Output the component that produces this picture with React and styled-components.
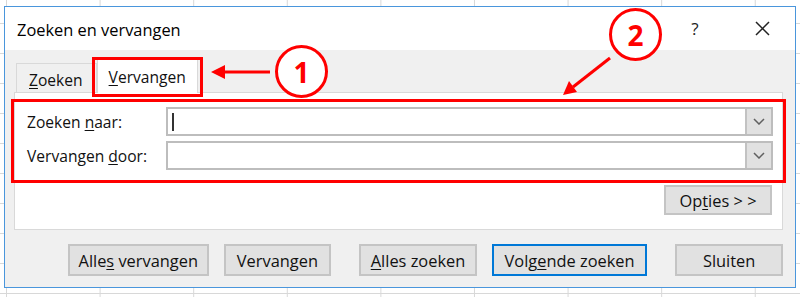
import React from "react";
import styled, { createGlobalStyle } from "styled-components";

const GlobalStyle = createGlobalStyle`
  html, body {
    margin: 0;
    padding: 0;
  }
  body {
    font-family: "Open Sans", "Noto Sans", sans-serif;
    color: #111;
  }
`;

// spreadsheet grid behind the dialog
const Page = styled.div`
  position: relative;
  width: 800px;
  height: 297px;
  overflow: hidden;
  box-sizing: border-box;
  padding: 6px 0 0 4px;
  background-color: #fff;
  background-image: linear-gradient(to right, #d8d8d8 1px, transparent 1px),
    linear-gradient(to bottom, #d8d8d8 1px, transparent 1px);
  background-size: 93.6px 100%, 100% 30px;
  background-position: 6px 0, 0 23px;
`;

const Dialog = styled.div`
  width: 792px;
  height: 282px;
  box-sizing: border-box;
  border: 1px solid #4a96dc;
  background: #f0f0f0;
  display: flex;
  flex-direction: column;
`;

const TitleBar = styled.div`
  height: 43px;
  flex-shrink: 0;
  background: #fff;
  display: flex;
  align-items: center;
  padding-left: 12px;
`;

const Title = styled.div`
  flex: 1;
  font-size: 16.4px;
  color: #000;
  padding-top: 1px;
`;

const TitleButton = styled.div`
  width: 46px;
  height: 30px;
  display: flex;
  align-items: center;
  justify-content: center;
  font-size: 17px;
  color: #222;
  margin-right: ${(p) => p.$gap || 0}px;
`;

const Body = styled.div`
  flex: 1;
  padding: 9px 12px 0 9px;
  display: flex;
  flex-direction: column;
`;

const TabRow = styled.div`
  height: 33px;
  display: flex;
  align-items: flex-end;
  padding-left: 2px;
  position: relative;
  z-index: 1;
`;

const Tab = styled.div`
  box-sizing: border-box;
  height: ${(p) => (p.$active ? 34 : 29)}px;
  margin-bottom: ${(p) => (p.$active ? -1 : 0)}px;
  padding: ${(p) => (p.$active ? "1px 11px 0 11px" : "4px 13px 0 12px")};
  background: ${(p) => (p.$active ? "#fff" : "#f0f0f0")};
  border: 1px solid #d9d9d9;
  border-bottom: none;
  display: flex;
  align-items: center;
  font-size: 15.6px;
  color: #111;
`;

const Key = styled.span`
  text-decoration: underline;
  text-underline-offset: 2px;
`;

const Caption = styled.span`
  white-space: pre;
`;

const Panel = styled.div`
  height: 138px;
  box-sizing: border-box;
  background: #fff;
  border: 1px solid #d9d9d9;
  padding: 14px 9px 0 12px;
  display: flex;
  flex-direction: column;
`;

const FieldRow = styled.div`
  display: flex;
  align-items: center;
  height: 29px;
  margin-bottom: 5px;
`;

const Label = styled.div`
  width: 139px;
  font-size: 15.6px;
  color: #111;
`;

const TextBox = styled.div`
  flex: 1;
  height: 29px;
  box-sizing: border-box;
  border: 2px solid #bdbdbd;
  background: #fff;
  display: flex;
  align-items: center;
  padding-left: 4px;
`;

const Caret = styled.div`
  width: 2px;
  height: 18px;
  background: #333;
`;

const DropButton = styled.div`
  margin-left: auto;
  width: 26px;
  height: 100%;
  box-sizing: border-box;
  border-left: 2px solid #c2c2c2;
  background: #e1e1e1;
  display: flex;
  align-items: center;
  justify-content: center;
`;

const Button = styled.div`
  box-sizing: border-box;
  width: ${(p) => p.$w}px;
  height: ${(p) => p.$h || 32}px;
  margin-left: ${(p) => p.$ml || 0}px;
  background: #e1e1e1;
  border: ${(p) => (p.$default ? "2px solid #0078d7" : "2px solid #c4c4c4")};
  display: flex;
  align-items: center;
  justify-content: center;
  font-size: 16.4px;
  color: #111;
`;

const OptionsRow = styled.div`
  display: flex;
  justify-content: flex-end;
  margin-top: 10px;
  padding-right: 1px;
`;

const Footer = styled.div`
  display: flex;
  margin-top: 14px;
  padding-left: 54px;
`;

// red annotations drawn over the screenshot
const RedFrame = styled.div`
  position: absolute;
  box-sizing: border-box;
  border: 3px solid #ff0000;
  left: ${(p) => p.$x}px;
  top: ${(p) => p.$y}px;
  width: ${(p) => p.$w}px;
  height: ${(p) => p.$h}px;
  z-index: 5;
`;

const Marker = styled.div`
  position: absolute;
  left: ${(p) => p.$x}px;
  top: ${(p) => p.$y}px;
  width: 53px;
  height: 53px;
  box-sizing: border-box;
  border: 3px solid #ff0000;
  border-radius: 50%;
  background: #fff;
  display: flex;
  align-items: center;
  justify-content: center;
  font-size: 28px;
  font-weight: 700;
  color: #ff0000;
  z-index: 5;
`;

const Arrows = styled.svg`
  position: absolute;
  left: 0;
  top: 0;
  z-index: 5;
`;

const Chevron = () => (
  <svg width="12" height="7" viewBox="0 0 12 7">
    <polyline points="1,1 6,6 11,1" fill="none" stroke="#606060" strokeWidth="1.5" />
  </svg>
);

const CloseIcon = () => (
  <svg width="15" height="15" viewBox="0 0 15 15">
    <path d="M1 1 L14 14 M14 1 L1 14" stroke="#222" strokeWidth="1.5" />
  </svg>
);

export default function App() {
  return (
    <Page>
      <GlobalStyle />
      <Dialog>
        <TitleBar>
          <Title>Zoeken en vervangen</Title>
          <TitleButton $gap={21}>?</TitleButton>
          <TitleButton $gap={10}>
            <CloseIcon />
          </TitleButton>
        </TitleBar>
        <Body>
          <TabRow>
            <Tab>
              <Caption>
                <Key>Z</Key>oeken
              </Caption>
            </Tab>
            <Tab $active>
              <Caption>
                <Key>V</Key>ervangen
              </Caption>
            </Tab>
          </TabRow>
          <Panel>
            <FieldRow>
              <Label>
                Zoeken <Key>n</Key>aar:
              </Label>
              <TextBox>
                <Caret />
                <DropButton>
                  <Chevron />
                </DropButton>
              </TextBox>
            </FieldRow>
            <FieldRow>
              <Label>
                Vervangen <Key>d</Key>oor:
              </Label>
              <TextBox>
                <DropButton>
                  <Chevron />
                </DropButton>
              </TextBox>
            </FieldRow>
            <OptionsRow>
              <Button $w={108} $h={30}>
                <Caption>
                  Op<Key>t</Key>ies &gt; &gt;
                </Caption>
              </Button>
            </OptionsRow>
          </Panel>
          <Footer>
            <Button $w={141}>
              <Caption>
                Alle<Key>s</Key> vervangen
              </Caption>
            </Button>
            <Button $w={108} $ml={15}>
              <Caption>
                Vervan<Key>g</Key>en
              </Caption>
            </Button>
            <Button $w={118} $ml={28}>
              <Caption>
                <Key>A</Key>lles zoeken
              </Caption>
            </Button>
            <Button $w={156} $ml={15} $default>
              <Caption>
                Volg<Key>e</Key>nde zoeken
              </Caption>
            </Button>
            <Button $w={108} $ml={28}>
              <Caption>Sluiten</Caption>
            </Button>
          </Footer>
        </Body>
      </Dialog>

      <RedFrame $x={92} $y={57} $w={111} $h={40} />
      <RedFrame $x={11} $y={99} $w={775} $h={84} />
      <Marker $x={275} $y={45}>1</Marker>
      <Marker $x={609} $y={8}>2</Marker>
      <Arrows width="800" height="297">
        <line x1="270" y1="72" x2="222" y2="72" stroke="#ff0000" strokeWidth="3" />
        <polygon points="211,72 225,65 225,79" fill="#ff0000" />
        <line x1="610" y1="58" x2="573" y2="87" stroke="#ff0000" strokeWidth="3" />
        <polygon points="563,95 577,92 569,81" fill="#ff0000" />
      </Arrows>
    </Page>
  );
}
